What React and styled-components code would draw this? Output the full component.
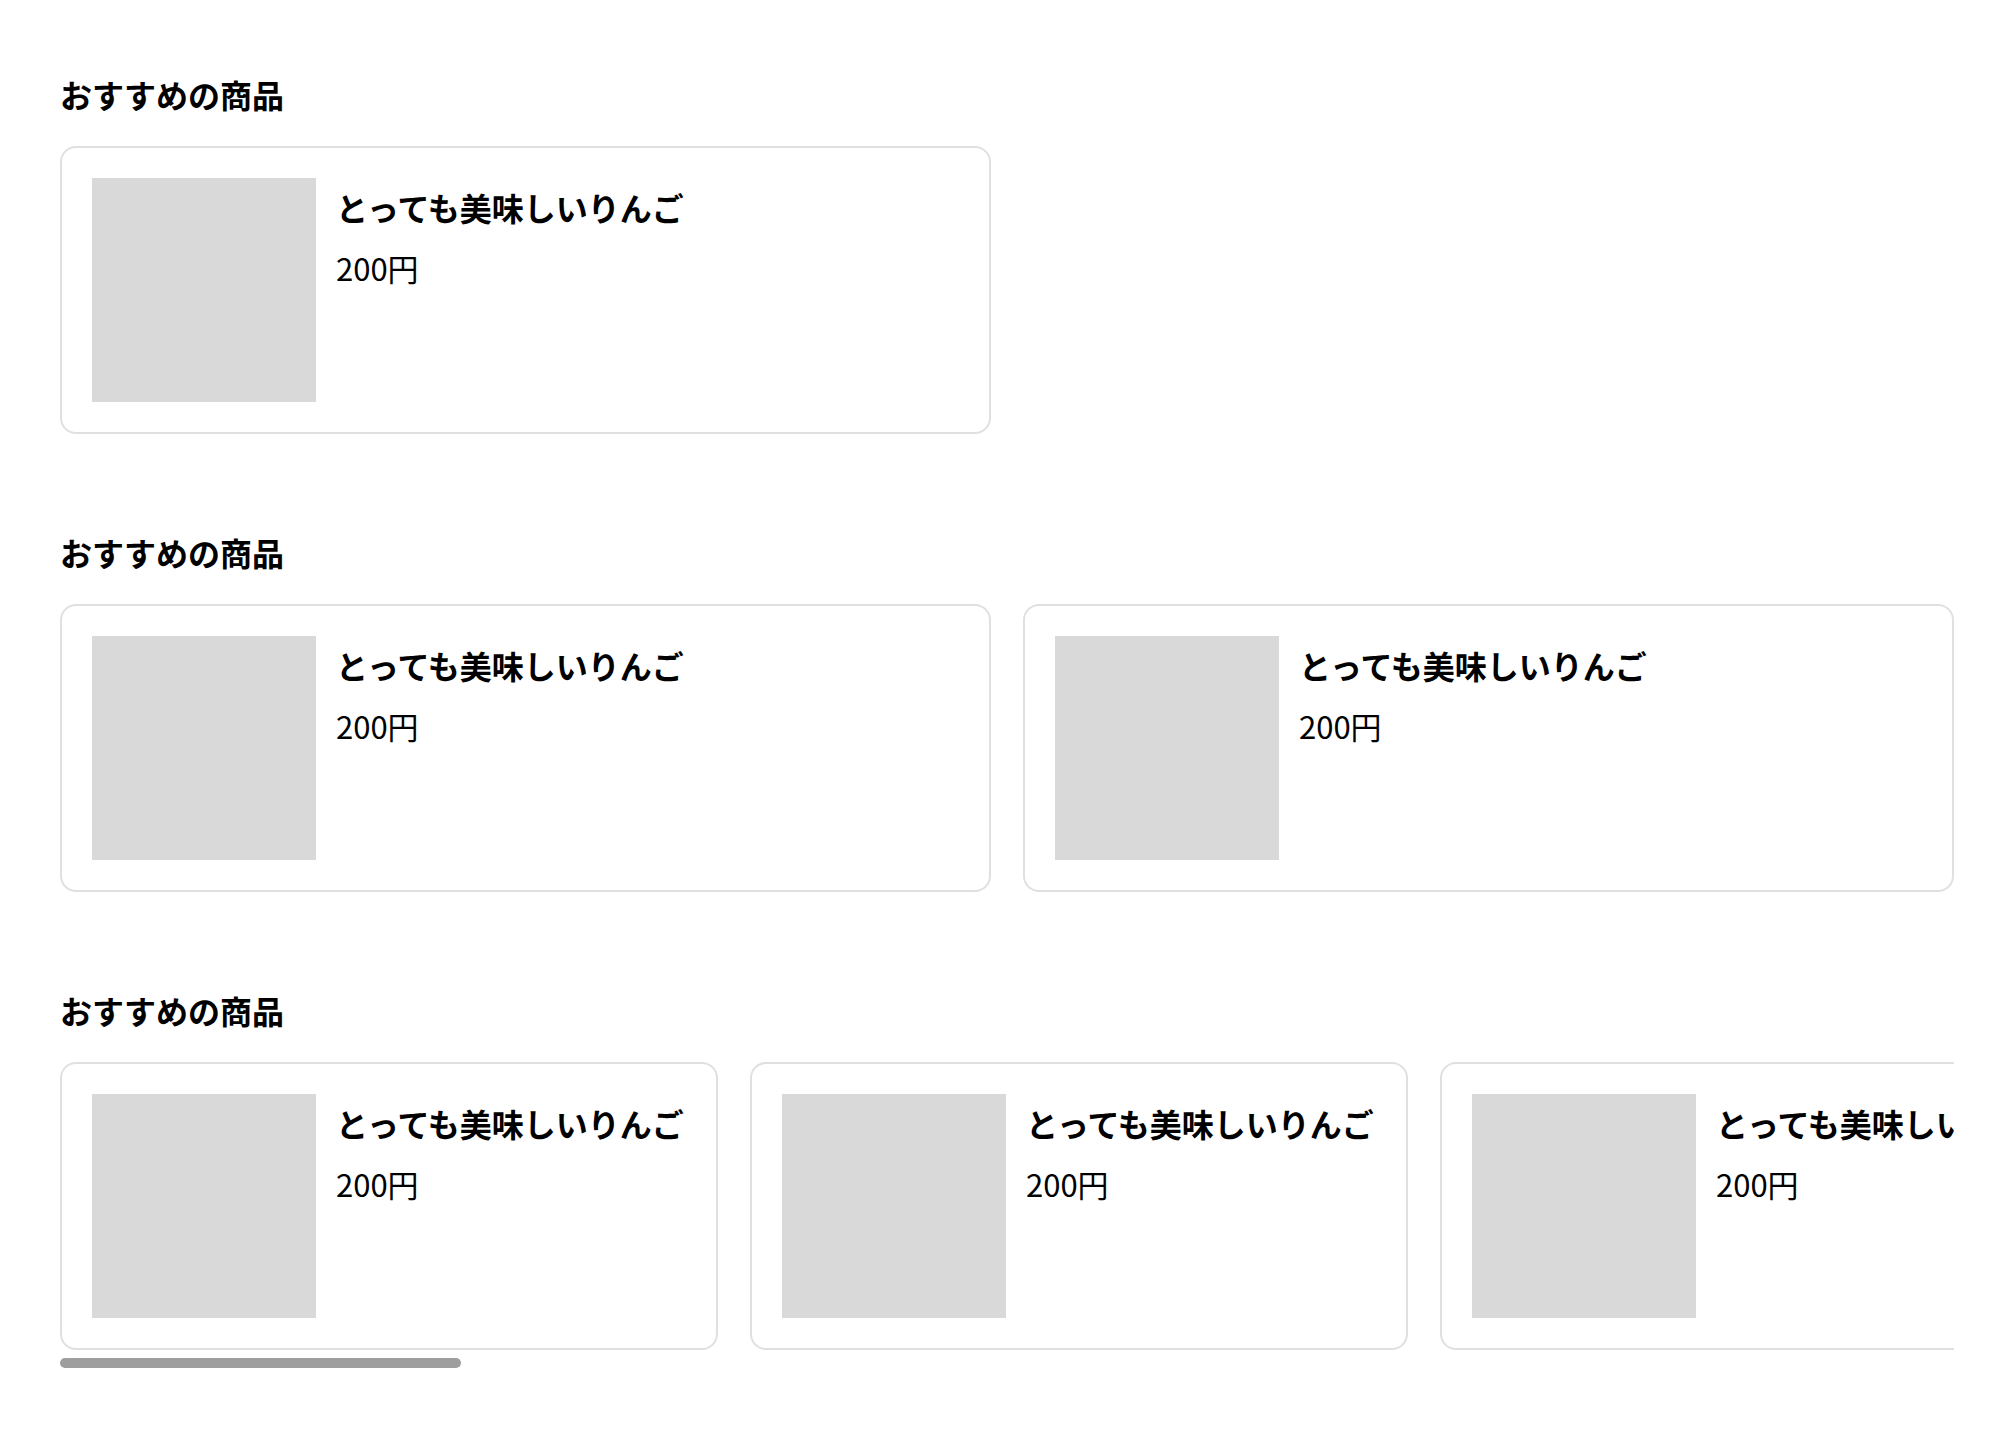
import React, { useLayoutEffect, useRef, useState } from 'react';
import styled, { createGlobalStyle } from 'styled-components';

const Global = createGlobalStyle`
  html, body { margin: 0; padding: 0; background: #fff; }
  body {
    font-family: "Noto Sans CJK JP", "Noto Sans", sans-serif;
    color: #000;
  }
  * { box-sizing: border-box; }
`;

const Page = styled.main`
  display: flex;
  flex-direction: column;
  gap: 95px;
  padding: 71px 60px 40px;
`;

const Section = styled.section`
  display: flex;
  flex-direction: column;
  gap: 29px;
  min-width: 0;
`;

const Heading = styled.h2`
  margin: 0;
  font-size: 32px;
  line-height: 46px;
  font-weight: 700;
`;

const Grid = styled.div`
  display: grid;
  grid-template-columns: repeat(2, minmax(0, 1fr));
  gap: 32px;
`;

const Carousel = styled.div`
  display: flex;
  flex-direction: column;
  gap: 8px;
  min-width: 0;
`;

const Scroller = styled.div`
  display: flex;
  gap: 32px;
  overflow-x: auto;
  scrollbar-width: none;
  &::-webkit-scrollbar { display: none; }
`;

const Track = styled.div`
  height: 10px;
  position: relative;
`;

const TrackThumb = styled.div`
  height: 10px;
  border-radius: 5px;
  background: #9e9e9e;
`;

const Card = styled.article`
  display: flex;
  gap: 20px;
  padding: 30px;
  border: 2px solid #e0e0e0;
  border-radius: 16px;
  background: #fff;
  min-width: 0;
  flex: ${p => (p.$fixed ? '0 0 658px' : '0 1 auto')};
`;

const Thumb = styled.div`
  flex: 0 0 224px;
  height: 224px;
  background: #d9d9d9;
`;

const Info = styled.div`
  display: flex;
  flex-direction: column;
  gap: 16px;
  padding-top: 6px;
  min-width: 0;
`;

const Name = styled.h3`
  margin: 0;
  font-size: 32px;
  line-height: 46px;
  font-weight: 700;
  white-space: nowrap;
`;

const Price = styled.p`
  margin: 0;
  font-size: 31px;
  line-height: 44px;
  font-weight: 400;
`;

const product = { name: 'とっても美味しいりんご', price: '200円' };

function ProductCard({ fixed }) {
  return (
    <Card $fixed={fixed}>
      <Thumb />
      <Info>
        <Name>{product.name}</Name>
        <Price>{product.price}</Price>
      </Info>
    </Card>
  );
}

function ProductCarousel({ count }) {
  const ref = useRef(null);
  const [ratio, setRatio] = useState(0.21);
  const [offset, setOffset] = useState(0);

  useLayoutEffect(() => {
    const el = ref.current;
    if (!el) return;
    const update = () => {
      setRatio(el.clientWidth / el.scrollWidth);
      setOffset(el.scrollLeft / el.scrollWidth);
    };
    update();
    el.addEventListener('scroll', update);
    window.addEventListener('resize', update);
    return () => {
      el.removeEventListener('scroll', update);
      window.removeEventListener('resize', update);
    };
  }, []);

  return (
    <Carousel>
      <Scroller ref={ref}>
        {Array.from({ length: count }).map((_, i) => (
          <ProductCard key={i} fixed />
        ))}
      </Scroller>
      <Track>
        <TrackThumb style={{ width: `${ratio * 100}%`, marginLeft: `${offset * 100}%` }} />
      </Track>
    </Carousel>
  );
}

export default function App() {
  return (
    <>
      <Global />
      <Page>
        <Section>
          <Heading>おすすめの商品</Heading>
          <Grid>
            <ProductCard />
          </Grid>
        </Section>
        <Section>
          <Heading>おすすめの商品</Heading>
          <Grid>
            <ProductCard />
            <ProductCard />
          </Grid>
        </Section>
        <Section>
          <Heading>おすすめの商品</Heading>
          <ProductCarousel count={13} />
        </Section>
      </Page>
    </>
  );
}
